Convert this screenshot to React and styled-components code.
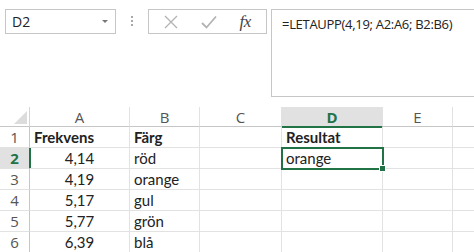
import React from 'react';
import styled, { createGlobalStyle } from 'styled-components';

const GlobalStyle = createGlobalStyle`
  html, body {
    margin: 0;
    padding: 0;
    background: #fff;
    overflow: hidden;
  }
  body {
    font-family: "Open Sans", "Noto Sans", sans-serif;
    color: #222;
  }
`;

const green = '#217346';

const columns = [
  { key: 'A', width: 100 },
  { key: 'B', width: 70 },
  { key: 'C', width: 82 },
  { key: 'D', width: 101 },
  { key: 'E', width: 70 },
  { key: 'F', width: 60 },
];

const rows = [
  { A: 'Frekvens', B: 'Färg', D: 'Resultat', bold: true },
  { A: '4,14', B: 'röd', D: 'orange' },
  { A: '4,19', B: 'orange' },
  { A: '5,17', B: 'gul' },
  { A: '5,77', B: 'grön' },
  { A: '6,39', B: 'blå' },
];

const Page = styled.div`
  width: 474px;
  height: 252px;
  overflow: hidden;
`;

const Toolbar = styled.div`
  display: flex;
  align-items: flex-start;
  padding: 9px 0 0 5px;
  height: 98px;
  box-sizing: border-box;
`;

const NameBox = styled.div`
  width: 111px;
  height: 25px;
  box-sizing: border-box;
  border: 1px solid #c6c6c6;
  display: flex;
  align-items: center;
  justify-content: space-between;
  padding: 0 7px 0 6px;
  font-size: 14px;
  color: #222;
`;

const Caret = styled.span`
  width: 0;
  height: 0;
  border-left: 3px solid transparent;
  border-right: 3px solid transparent;
  border-top: 3px solid #777;
`;

const Grip = styled.div`
  width: 2px;
  margin: 7px 15px 0 15px;
  display: flex;
  flex-direction: column;
  gap: 2px;
  & span {
    width: 2px;
    height: 2px;
    background: #a8a8a8;
  }
`;

const FuncBox = styled.div`
  width: 119px;
  height: 25px;
  box-sizing: border-box;
  border: 1px solid #c6c6c6;
  display: flex;
  align-items: center;
  justify-content: space-around;
  padding: 0 4px;
`;

const Fx = styled.span`
  font-family: "Liberation Serif", "DejaVu Serif", serif;
  font-style: italic;
  font-size: 17px;
  color: #444;
  letter-spacing: -0.5px;
`;

const FormulaBar = styled.div`
  margin-left: 4px;
  flex: 1;
  height: 88px;
  box-sizing: border-box;
  border: 1px solid #c6c6c6;
  border-right: none;
  padding: 5px 0 0 10px;
  font-size: 13px;
  letter-spacing: -0.3px;
  color: #222;
  margin-right: -10px;
`;

const Sheet = styled.div`
  display: grid;
  grid-template-columns: 30px ${columns.map((c) => `${c.width}px`).join(' ')};
  grid-template-rows: 20px repeat(6, 21px);
  margin-top: 9px;
  font-family: Lato, "Open Sans", sans-serif;
  font-size: 15px;
`;

const Corner = styled.div`
  border-right: 1px solid #d4d4d4;
  border-bottom: 1px solid #c6c6c6;
  display: flex;
  align-items: flex-end;
  justify-content: flex-end;
  padding: 0 2px 2px 0;
`;

const ColHead = styled.div`
  display: flex;
  align-items: center;
  justify-content: center;
  border-right: 1px solid #e2e2e2;
  border-bottom: ${(p) => (p.$active ? `2px solid ${green}` : '1px solid #c6c6c6')};
  background: ${(p) => (p.$active ? '#e1e1e1' : '#fff')};
  color: ${(p) => (p.$active ? green : '#555')};
  font-family: "Open Sans", sans-serif;
  font-weight: ${(p) => (p.$active ? 700 : 400)};
  font-size: 15px;
  margin-bottom: ${(p) => (p.$active ? '-1px' : '0')};
`;

const RowHead = styled.div`
  display: flex;
  align-items: center;
  justify-content: center;
  border-bottom: 1px solid #e2e2e2;
  border-right: ${(p) => (p.$active ? `2px solid ${green}` : '1px solid #c6c6c6')};
  background: ${(p) => (p.$active ? '#e1e1e1' : '#fff')};
  color: ${(p) => (p.$active ? green : '#555')};
  font-family: "Open Sans", sans-serif;
  font-weight: ${(p) => (p.$active ? 700 : 400)};
  font-size: 15px;
  margin-right: ${(p) => (p.$active ? '-1px' : '0')};
`;

const Cell = styled.div`
  position: relative;
  display: flex;
  align-items: center;
  justify-content: ${(p) => (p.$center ? 'center' : 'flex-start')};
  padding: 0 4px;
  border-right: 1px solid #e2e2e2;
  border-bottom: 1px solid #e2e2e2;
  font-weight: ${(p) => (p.$bold ? 700 : 400)};
  color: #222;
  white-space: nowrap;
  ${(p) =>
    p.$selected &&
    `
    outline: 2px solid ${green};
    outline-offset: -1px;
    z-index: 1;
  `}
`;

const Handle = styled.span`
  position: absolute;
  right: -4px;
  bottom: -4px;
  width: 5px;
  height: 5px;
  background: ${green};
  border: 1px solid #fff;
`;

export default function App() {
  return (
    <Page>
      <GlobalStyle />
      <Toolbar>
        <NameBox>
          D2
          <Caret />
        </NameBox>
        <Grip>
          <span />
          <span />
          <span />
        </Grip>
        <FuncBox>
          <svg width="14" height="14" viewBox="0 0 14 14">
            <path d="M1 1 L13 13 M13 1 L1 13" stroke="#b3b3b3" strokeWidth="1.3" fill="none" />
          </svg>
          <svg width="16" height="14" viewBox="0 0 16 14">
            <path d="M1 8 L5.5 12.5 L15 1.5" stroke="#b3b3b3" strokeWidth="1.8" fill="none" />
          </svg>
          <Fx>fx</Fx>
        </FuncBox>
        <FormulaBar>=LETAUPP(4,19; A2:A6; B2:B6)</FormulaBar>
      </Toolbar>
      <Sheet>
        <Corner>
          <svg width="13" height="13" viewBox="0 0 13 13">
            <polygon points="13,0 13,13 0,13" fill="#dcdcdc" />
          </svg>
        </Corner>
        {columns.map((c) => (
          <ColHead key={c.key} $active={c.key === 'D'}>
            {c.key === 'F' ? '' : c.key}
          </ColHead>
        ))}
        {rows.map((r, i) => (
          <React.Fragment key={i}>
            <RowHead $active={i === 1}>{i + 1}</RowHead>
            {columns.map((c) => (
              <Cell
                key={c.key}
                $bold={r.bold}
                $center={c.key === 'A' && !r.bold}
                $selected={i === 1 && c.key === 'D'}
              >
                {r[c.key] || ''}
                {i === 1 && c.key === 'D' && <Handle />}
              </Cell>
            ))}
          </React.Fragment>
        ))}
      </Sheet>
    </Page>
  );
}
